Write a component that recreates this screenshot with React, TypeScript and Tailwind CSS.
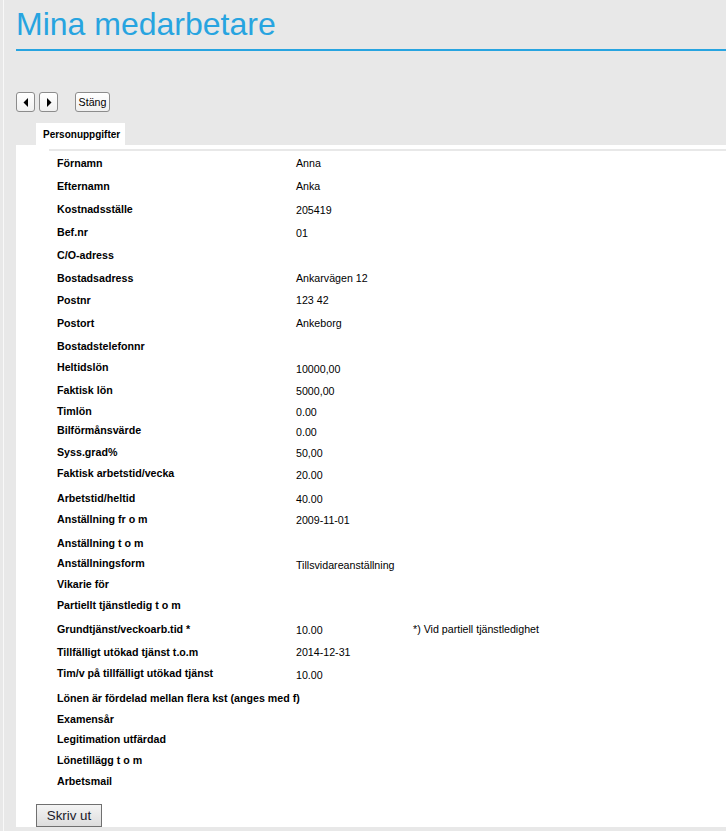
import React from "react";

type Row = { label: string; value?: string; note?: string; h: string; v?: string };

const rows: Row[] = [
  { label: "Förnamn", value: "Anna", h: "h-[23px]" },
  { label: "Efternamn", value: "Anka", h: "h-[23px]" },
  { label: "Kostnadsställe", value: "205419", h: "h-[23px]", v: "pt-[1px]" },
  { label: "Bef.nr", value: "01", h: "h-[23px]", v: "pt-[1px]" },
  { label: "C/O-adress", h: "h-[23px]" },
  { label: "Bostadsadress", value: "Ankarvägen 12", h: "h-[22px]" },
  { label: "Postnr", value: "123 42", h: "h-[23px]" },
  { label: "Postort", value: "Ankeborg", h: "h-[23px]" },
  { label: "Bostadstelefonnr", h: "h-[21px]" },
  { label: "Heltidslön", value: "10000,00", h: "h-[23px]", v: "pt-[2px]" },
  { label: "Faktisk lön", value: "5000,00", h: "h-[21px]", v: "pt-[1px]" },
  { label: "Timlön", value: "0.00", h: "h-[19px]", v: "pt-[1px]" },
  { label: "Bilförmånsvärde", value: "0.00", h: "h-[22px]", v: "pt-[2px]" },
  { label: "Syss.grad%", value: "50,00", h: "h-[21px]", v: "pt-[1px]" },
  { label: "Faktisk arbetstid/vecka", value: "20.00", h: "h-[25px]", v: "pt-[2px]" },
  { label: "Arbetstid/heltid", value: "40.00", h: "h-[21px]", v: "pt-[1px]" },
  { label: "Anställning fr o m", value: "2009-11-01", h: "h-[24px]", v: "pt-[1px]" },
  { label: "Anställning t o m", h: "h-[20px]" },
  { label: "Anställningsform", value: "Tillsvidareanställning", h: "h-[21px]", v: "pt-[2px]" },
  { label: "Vikarie för", h: "h-[21px]" },
  { label: "Partiellt tjänstledig t o m", h: "h-[24px]" },
  { label: "Grundtjänst/veckoarb.tid *", value: "10.00", note: "*) Vid partiell tjänstledighet", h: "h-[23px]", v: "pt-[1px]" },
  { label: "Tillfälligt utökad tjänst t.o.m", value: "2014-12-31", h: "h-[21px]" },
  { label: "Tim/v på tillfälligt utökad tjänst", value: "10.00", h: "h-[25px]", v: "pt-[2px]" },
  { label: "Lönen är fördelad mellan flera kst (anges med f)", h: "h-[21px]" },
  { label: "Examensår", h: "h-[20px]" },
  { label: "Legitimation utfärdad", h: "h-[21px]" },
  { label: "Lönetillägg t o m", h: "h-[21px]" },
  { label: "Arbetsmail", h: "h-[22px]" },
];

function ArrowButton({ dir }: { dir: "left" | "right" }) {
  return (
    <button className="w-[19px] h-[20px] rounded-[3px] border border-[#8c8c8c] bg-gradient-to-b from-white to-[#f0f0f0] flex items-center justify-center">
      <svg width="6" height="9" viewBox="0 0 6 9">
        {dir === "left" ? (
          <polygon points="5,0 5,9 0.5,4.5" fill="#000" />
        ) : (
          <polygon points="1,0 1,9 5.5,4.5" fill="#000" />
        )}
      </svg>
    </button>
  );
}

export default function App() {
  return (
    <div className="min-h-screen w-[726px] overflow-hidden bg-[#e8e8e8] font-['Liberation_Sans',Arial,sans-serif] text-black">
      <div className="ml-[3px] border-l border-[#f8f8f8] pl-[12px] min-h-screen">
        <div className="pt-[8px]">
          <h1 className="text-[32px] leading-[32px] text-[#27a4e0] font-normal">Mina medarbetare</h1>
        </div>
        <div className="mt-[9px] h-[2px] bg-[#27a4e0]" />

        <div className="mt-[41px] flex items-center">
          <div className="flex gap-[4px]">
            <ArrowButton dir="left" />
            <ArrowButton dir="right" />
          </div>
          <button className="ml-[17px] w-[35px] h-[20px] rounded-[3px] border border-[#8c8c8c] bg-gradient-to-b from-white to-[#f0f0f0] text-[10.67px] leading-none flex items-center justify-center">
            Stäng
          </button>
        </div>

        <div className="mt-[11px] ml-[20px] w-[89px] h-[22px] bg-white pl-[7px] flex items-center text-[10px] font-bold">
          Personuppgifter
        </div>

        <div className="bg-white">
          <div className="pt-[4px]">
            <div className="ml-[33px] h-[2px] bg-[#e8e8e8]" />
          </div>
          <div className="pt-[1px] pl-[41px]">
            {rows.map((r) => (
              <div key={r.label} className={`flex text-[10.67px] leading-[22px] ${r.h}`}>
                <div className="w-[239px] shrink-0 font-bold whitespace-nowrap">{r.label}</div>
                <div className={`w-[117px] shrink-0 whitespace-nowrap ${r.v ?? ""}`}>{r.value ?? ""}</div>
                {r.note && <div className="whitespace-nowrap">{r.note}</div>}
              </div>
            ))}
          </div>
          <div className="pt-[12px] pl-[20px]">
            <button className="w-[66px] h-[23px] border border-[#707070] bg-gradient-to-b from-[#f4f4f4] to-[#dddddd] text-[13.33px] leading-none text-[#1a1a2a] flex items-center justify-center">
              Skriv ut
            </button>
          </div>
        </div>
      </div>
    </div>
  );
}
